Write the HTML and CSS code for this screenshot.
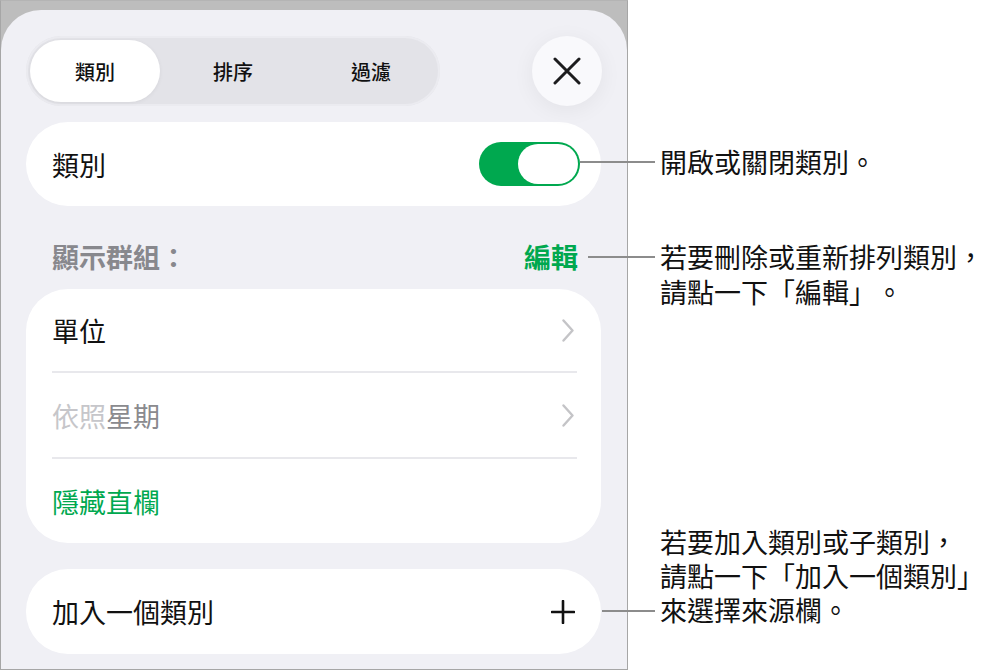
FILE: index.html
```html
<!DOCTYPE html>
<html lang="zh-Hant">
<head>
    <meta charset="UTF-8">
    <meta name="viewport" content="width=device-width, initial-scale=1.0">
    <title>類別</title>
    <link rel="stylesheet" href="styles.css">
</head>
<body>
    <div class="page">
        <div class="device">
            <div class="sheet">
                <div class="top-bar">
                    <div class="segmented">
                        <div class="seg-item selected">類別</div>
                        <div class="seg-item">排序</div>
                        <div class="seg-item">過濾</div>
                    </div>
                    <button class="close-btn" aria-label="關閉">
                        <svg width="28" height="28" viewBox="0 0 28 28">
                            <path d="M2 2 L26 26 M26 2 L2 26" stroke="#1c1c1e" stroke-width="3" stroke-linecap="round"/>
                        </svg>
                    </button>
                </div>

                <div class="card toggle-card">
                    <span>類別</span>
                    <div class="toggle"><div class="thumb"></div></div>
                </div>

                <div class="section-head">
                    <span class="head-label">顯示群組：</span>
                    <span class="head-action">編輯</span>
                </div>

                <div class="card group-card">
                    <div class="row">
                        <span>單位</span>
                        <svg class="chevron" width="12" height="23" viewBox="0 0 12 23">
                            <path d="M1.5 1.5 L10.5 11.5 L1.5 21.5" fill="none" stroke="#c4c4c7" stroke-width="2.4" stroke-linecap="round" stroke-linejoin="round"/>
                        </svg>
                    </div>
                    <div class="row">
                        <span><span class="dim">依照</span><span class="muted">星期</span></span>
                        <svg class="chevron" width="12" height="23" viewBox="0 0 12 23">
                            <path d="M1.5 1.5 L10.5 11.5 L1.5 21.5" fill="none" stroke="#c4c4c7" stroke-width="2.4" stroke-linecap="round" stroke-linejoin="round"/>
                        </svg>
                    </div>
                    <div class="row green">隱藏直欄</div>
                </div>

                <div class="card add-card">
                    <span>加入一個類別</span>
                    <svg width="24" height="24" viewBox="0 0 24 24">
                        <path d="M12 1 V23 M1 12 H23" stroke="#111" stroke-width="2.6" stroke-linecap="round"/>
                    </svg>
                </div>
            </div>
        </div>

        <div class="notes">
            <p class="note note-toggle">開啟或關閉類別。</p>
            <p class="note note-edit">若要刪除或重新排列類別，<br>請點一下「編輯」。</p>
            <p class="note note-add">若要加入類別或子類別，<br>請點一下「加入一個類別」<br>來選擇來源欄。</p>
        </div>

        <div class="leader leader-toggle"></div>
        <div class="leader leader-edit"></div>
        <div class="leader leader-add"></div>
    </div>
</body>
</html>
```

FILE: styles.css
```css
body {
    margin: 0;
    background-color: #fff;
    font-family: "Noto Sans CJK TC", "Noto Sans", sans-serif;
    color: #111;
    text-spacing-trim: space-all;
}

.page {
    position: relative;
    display: flex;
    width: 1000px;
    height: 670px;
}

.device {
    width: 628px;
    height: 670px;
    box-sizing: border-box;
    border: 1px solid #a6a6a6;
    border-top-color: #b4b4b4;
    background-color: #bdbdbd;
    padding-top: 9px;
}

.sheet {
    height: 100%;
    box-sizing: border-box;
    background-color: #f0f0f5;
    border-radius: 40px 40px 0 0;
    padding: 26px 26px 0 25px;
}

.top-bar {
    display: flex;
    justify-content: space-between;
    align-items: center;
    height: 70px;
}

.segmented {
    display: grid;
    grid-template-columns: repeat(3, 1fr);
    width: 414px;
    height: 70px;
    border-radius: 35px;
    background-color: #e3e3e8;
    box-shadow: inset 0 0 0 2px #ebebf0;
}

.seg-item {
    display: flex;
    justify-content: center;
    align-items: center;
    font-size: 20px;
    font-weight: 500;
    color: #111;
    border-radius: 31px;
}

.seg-item.selected {
    margin: 4px 4px 4px 4px;
    background-color: #fff;
    box-shadow: 0 1px 4px rgba(0, 0, 0, 0.06);
}

.close-btn {
    display: flex;
    justify-content: center;
    align-items: center;
    width: 70px;
    height: 70px;
    margin-right: -1px;
    padding: 0;
    border: none;
    border-radius: 50%;
    background-color: #f9f9fc;
    box-shadow: 0 4px 22px rgba(0, 0, 0, 0.06);
}

.card {
    background-color: #fff;
    border-radius: 42px;
    font-size: 27px;
}

.toggle-card {
    display: flex;
    justify-content: space-between;
    align-items: center;
    height: 84px;
    margin-top: 16px;
    padding: 0 21px 0 26px;
}

.toggle {
    display: flex;
    justify-content: flex-end;
    align-items: center;
    width: 101px;
    height: 44px;
    box-sizing: border-box;
    padding: 0 2px;
    border-radius: 22px;
    background-color: #00a84f;
}

.thumb {
    width: 60px;
    height: 40px;
    border-radius: 20px;
    background-color: #fff;
}

.section-head {
    display: flex;
    justify-content: space-between;
    height: 83px;
    box-sizing: border-box;
    padding: 35px 23px 0 26px;
    font-size: 27px;
    line-height: 32px;
    font-weight: 700;
}

.head-label {
    color: #88888d;
}

.head-action {
    color: #00a84f;
}

.group-card {
    padding: 0 24px 0 26px;
}

.row {
    display: flex;
    justify-content: space-between;
    align-items: center;
    height: 84px;
    padding-right: 3px;
    border-bottom: 2px solid #e8e8ec;
}

.row:first-child {
    height: 82px;
}

.row:last-child {
    border-bottom: none;
}

.dim {
    color: #c6c6ca;
}

.muted {
    color: #8a8a8e;
}

.green {
    color: #00a84f;
}

.add-card {
    display: flex;
    justify-content: space-between;
    align-items: center;
    height: 85px;
    margin-top: 26px;
    padding: 0 26px 0 26px;
}

.notes {
    padding: 144px 0 0 32px;
}

.note {
    margin: 0;
    font-size: 27px;
    line-height: 35px;
    color: #111;
}

.note-edit {
    margin-top: 60px;
}

.note-add {
    margin-top: 216px;
    line-height: 34px;
}

.leader {
    position: absolute;
    height: 2px;
    background-color: #8c8c8c;
}

.leader-toggle {
    left: 580px;
    top: 161px;
    width: 75px;
}

.leader-edit {
    left: 588px;
    top: 256px;
    width: 67px;
}

.leader-add {
    left: 602px;
    top: 610px;
    width: 53px;
}
```
